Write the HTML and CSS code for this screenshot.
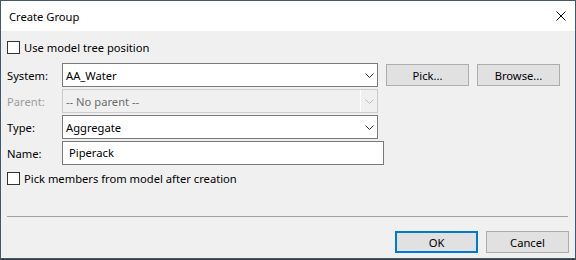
FILE: index.html
```html
<!DOCTYPE html>
<html lang="en">

<head>
    <meta charset="UTF-8">
    <title>Create Group</title>
    <link rel="stylesheet" href="styles.css">
</head>

<body>
    <div class="window">
        <!-- Title bar -->
        <div class="titlebar">
            <span class="title">Create Group</span>
            <span class="close-btn">
                <svg width="10" height="10" viewBox="0 0 10 10">
                    <path d="M0.5 0.5 L9.5 9.5 M9.5 0.5 L0.5 9.5" stroke="#000" stroke-width="1" fill="none"/>
                </svg>
            </span>
        </div>

        <div class="content">
            <label class="check-row first">
                <span class="checkbox"></span>
                <span>Use model tree position</span>
            </label>

            <!-- Form fields -->
            <div class="form-grid">
                <span class="field-label">System:</span>
                <div class="combo">
                    <span class="combo-text">AA_Water</span>
                    <span class="combo-arrow">
                        <svg width="9" height="5" viewBox="0 0 9 5"><polyline points="0.5,0.5 4.5,4.5 8.5,0.5" stroke="#333" fill="none"/></svg>
                    </span>
                </div>
                <button class="btn">Pick...</button>
                <button class="btn">Browse...</button>

                <span class="field-label disabled">Parent:</span>
                <div class="combo combo-disabled">
                    <span class="combo-text">-- No parent --</span>
                    <span class="combo-arrow">
                        <svg width="9" height="5" viewBox="0 0 9 5"><polyline points="0.5,0.5 4.5,4.5 8.5,0.5" stroke="#bcbcbc" fill="none"/></svg>
                    </span>
                </div>
                <span></span>
                <span></span>

                <span class="field-label">Type:</span>
                <div class="combo">
                    <span class="combo-text">Aggregate</span>
                    <span class="combo-arrow">
                        <svg width="9" height="5" viewBox="0 0 9 5"><polyline points="0.5,0.5 4.5,4.5 8.5,0.5" stroke="#333" fill="none"/></svg>
                    </span>
                </div>
                <span></span>
                <span></span>

                <span class="field-label">Name:</span>
                <div class="textbox">Piperack</div>
            </div>

            <label class="check-row second">
                <span class="checkbox"></span>
                <span>Pick members from model after creation</span>
            </label>

            <div class="separator"></div>

            <div class="footer">
                <button class="btn btn-default">OK</button>
                <button class="btn">Cancel</button>
            </div>
        </div>
    </div>
</body>

</html>
```

FILE: styles.css
```css
/* General */
body {
    margin: 0;
    padding: 0;
    background-color: #3b4048;
    font-family: 'Noto Sans', sans-serif;
    font-size: 11.2px;
    color: #000;
}

.window {
    width: 576px;
    height: 259px;
    box-sizing: border-box;
    border: 1px solid #43586e;
    background-color: #f0f0f0;
    display: flex;
    flex-direction: column;
}

/* Title bar */
.titlebar {
    height: 30px;
    background-color: #fff;
    display: flex;
    align-items: center;
    justify-content: space-between;
    padding: 0 9px 0 8px;
}

.close-btn {
    display: flex;
    width: 10px;
    height: 10px;
}

.content {
    padding: 0 6px;
}

/* Checkboxes */
.check-row {
    display: flex;
    align-items: center;
    height: 13px;
    gap: 4px;
    line-height: 13px;
}

.check-row.first {
    margin-top: 10px;
}

.check-row.second {
    margin-top: 7px;
}

.checkbox {
    width: 13px;
    height: 13px;
    box-sizing: border-box;
    border: 1px solid #333;
    background-color: #fff;
}

/* Form */
.form-grid {
    display: grid;
    grid-template-columns: 55px 316px 91px 91px;
    grid-auto-rows: 24px;
    row-gap: 2px;
    margin-top: 9px;
    align-items: center;
}

.field-label.disabled {
    color: #9d9d9d;
}

.combo {
    height: 24px;
    box-sizing: border-box;
    border: 1px solid #7a7a7a;
    background-color: #fff;
    display: flex;
    align-items: center;
    justify-content: space-between;
    padding-left: 3px;
}

.combo-disabled {
    border-color: #cccccc;
    background-color: #f0f0f0;
    color: #6d6d6d;
}

.combo-arrow {
    width: 16px;
    height: 22px;
    display: flex;
    align-items: center;
    justify-content: center;
}

.combo-disabled .combo-arrow {
    border-left: 1px solid #fff;
}

.textbox {
    grid-column: 2 / span 2;
    width: 322px;
    height: 24px;
    box-sizing: border-box;
    border: 1px solid #7a7a7a;
    background-color: #fff;
    padding-left: 6px;
    line-height: 21px;
}

/* Buttons */
.btn {
    width: 83px;
    height: 22px;
    box-sizing: border-box;
    border: 1px solid #adadad;
    background-color: #e1e1e1;
    font-family: 'Noto Sans', sans-serif;
    font-size: 11.2px;
    color: #000;
    padding: 0;
}

.form-grid .btn {
    justify-self: end;
}

.btn-default {
    border: 2px solid #0078d7;
}

.separator {
    height: 1px;
    margin-top: 31px;
    margin-right: 1px;
    background-color: #a0a0a0;
}

.footer {
    display: flex;
    justify-content: flex-end;
    gap: 8px;
    margin-top: 14px;
}
```
